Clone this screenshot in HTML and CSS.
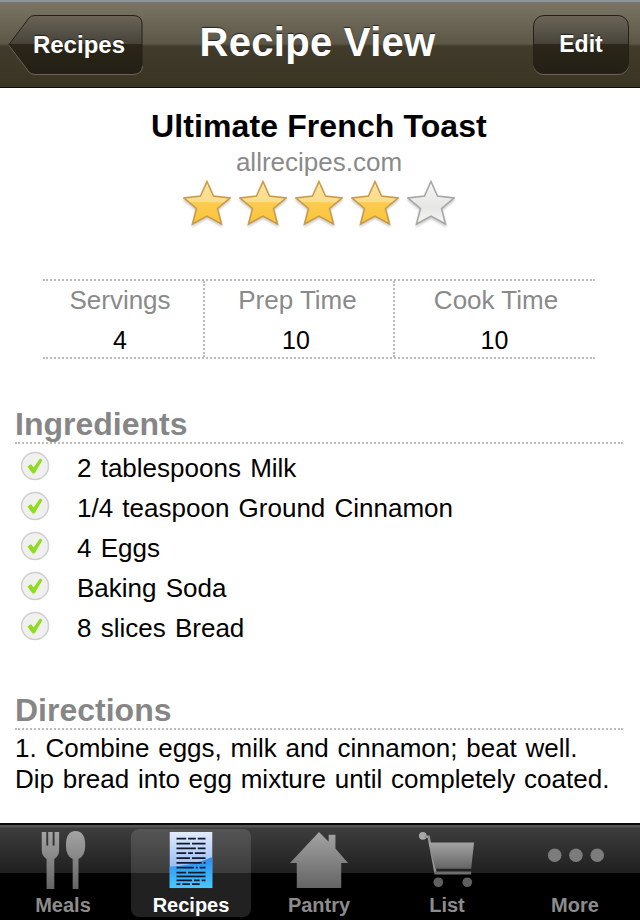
FILE: index.html
```html
<!DOCTYPE html>
<html lang="en">
<head>
    <meta charset="UTF-8">
    <meta name="viewport" content="width=device-width, initial-scale=1.0">
    <title>Recipe View</title>
    <link rel="stylesheet" href="styles.css">
</head>
<body>
    <svg class="defs" width="0" height="0">
        <defs>
            <linearGradient id="star-gold" x1="0" y1="0" x2="0" y2="1">
                <stop offset="0" stop-color="#fde3a0"/>
                <stop offset="0.47" stop-color="#fbdc8c"/>
                <stop offset="0.5" stop-color="#fccb4e"/>
                <stop offset="1" stop-color="#fbc53c"/>
            </linearGradient>
            <linearGradient id="star-grey" x1="0" y1="0" x2="0" y2="1">
                <stop offset="0" stop-color="#f6f6f4"/>
                <stop offset="0.6" stop-color="#e6e6e4"/>
                <stop offset="1" stop-color="#f6f6f4"/>
            </linearGradient>
            <linearGradient id="tab-grey" x1="0" y1="0" x2="0" y2="1">
                <stop offset="0" stop-color="#a4a4a4"/>
                <stop offset="1" stop-color="#646464"/>
            </linearGradient>
            <linearGradient id="doc-top" x1="0" y1="0" x2="0" y2="1">
                <stop offset="0" stop-color="#e2ebfc"/>
                <stop offset="0.6" stop-color="#9dbff4"/>
                <stop offset="1" stop-color="#6ea3ee"/>
            </linearGradient>
            <linearGradient id="doc-low" x1="0" y1="0" x2="0" y2="1">
                <stop offset="0" stop-color="#2a8cf0"/>
                <stop offset="1" stop-color="#45cbff"/>
            </linearGradient>
            <symbol id="star" viewBox="0 0 48 46">
                <path d="M24 1.500 L30.500 16 L47 18 L34.500 28.500 L38.500 44 L24 36 L9.500 44 L13.500 28.500 L1 18 L17.500 16 Z"/>
            </symbol>
            <symbol id="check" viewBox="0 0 30 30">
                <circle cx="15" cy="15" r="13.500" fill="#f0f0ee" stroke="#cfcfcd" stroke-width="1.500"/>
                <path d="M7.500 15.500 L11 13 L13.500 16.500 L20 7.500 L22.500 9 L14.500 22.500 L12.500 22.500 Z" fill="#8fdc1e"/>
            </symbol>
        </defs>
    </svg>

    <div class="page">
        <div class="navbar">
            <div class="nav-row">
                <div class="back-btn">
                    <svg class="back-shape" width="135" height="60" viewBox="0 0 135 60">
                        <defs>
                            <linearGradient id="back-fill" x1="0" y1="0" x2="0" y2="1">
                                <stop offset="0" stop-color="#6a6557"/>
                                <stop offset="0.49" stop-color="#48433a"/>
                                <stop offset="0.5" stop-color="#2b2619"/>
                                <stop offset="1" stop-color="#241f14"/>
                            </linearGradient>
                        </defs>
                        <path d="M1 29.500 L21 3 Q23 .5 27 .5 L125 .5 Q134 .5 134 9 L134 50 Q134 58.500 125 58.500 L27 58.500 Q23 58.500 21 56 Z" fill="url(#back-fill)" stroke="#25211a"/>
                        <path d="M1 30.500 L21 57 Q23 59.500 27 59.500 L125 59.500 Q134 59.500 134.500 51" fill="none" stroke="#7d7869" stroke-opacity="0.7"/>
                    </svg>
                    <span class="btn-label">Recipes</span>
                </div>
                <div class="nav-title">Recipe View</div>
                <div class="edit-btn"><span class="btn-label edit-label">Edit</span></div>
            </div>
        </div>

        <div class="content">
            <h1 class="title">Ultimate French Toast</h1>
            <div class="source">allrecipes.com</div>
            <div class="stars">
                <svg class="star gold"><use href="#star"/></svg>
                <svg class="star gold"><use href="#star"/></svg>
                <svg class="star gold"><use href="#star"/></svg>
                <svg class="star gold"><use href="#star"/></svg>
                <svg class="star empty"><use href="#star"/></svg>
            </div>

            <div class="times">
                <div class="time-col servings">
                    <div class="time-label">Servings</div>
                    <div class="time-value">4</div>
                </div>
                <div class="time-col prep">
                    <div class="time-label">Prep Time</div>
                    <div class="time-value">10</div>
                </div>
                <div class="time-col cook">
                    <div class="time-label">Cook Time</div>
                    <div class="time-value">10</div>
                </div>
            </div>

            <h2 class="section ingredients-head">Ingredients</h2>
            <ul class="ingredients">
                <li><svg class="check"><use href="#check"/></svg><span class="item-text">2 tablespoons Milk</span></li>
                <li><svg class="check"><use href="#check"/></svg><span class="item-text">1/4 teaspoon Ground Cinnamon</span></li>
                <li><svg class="check"><use href="#check"/></svg><span class="item-text">4 Eggs</span></li>
                <li><svg class="check"><use href="#check"/></svg><span class="item-text">Baking Soda</span></li>
                <li><svg class="check"><use href="#check"/></svg><span class="item-text">8 slices Bread</span></li>
            </ul>

            <h2 class="section directions-head">Directions</h2>
            <p class="directions">1. Combine eggs, milk and cinnamon; beat well.<br>Dip bread into egg mixture until completely coated.</p>
        </div>

        <div class="tabbar">
            <div class="tab">
                <svg class="tab-icon" width="64" height="60" viewBox="0 0 64 60">
                    <path d="M10 1 H14.700 V15 H16.700 V1 H21.300 V15 H23.300 V1 H28 V20 Q28 26 23 29 V60 H15 V29 Q10 26 10 20 Z" fill="url(#tab-grey)"/>
                    <path d="M45 0 Q55 0 55 15 Q55 26 48 29 V60 H42 V29 Q35 26 35 15 Q35 0 45 0 Z" fill="url(#tab-grey)"/>
                </svg>
                <span class="tab-label">Meals</span>
            </div>
            <div class="tab selected">
                <svg class="tab-icon" width="64" height="60" viewBox="0 0 64 60">
                    <rect x="10" y="1" width="44" height="58" fill="url(#doc-top)"/>
                    <path d="M10 37 Q34 36 54 27 V59 H10 Z" fill="url(#doc-low)"/>
                    <g stroke="#101a2c" stroke-width="1.800" fill="none">
                        <path d="M17 8 H27 M29 8 H37 M39 8 H47"/>
                        <path d="M17 13 H31 M33 13 H47"/>
                        <path d="M17 18 H37 M39 18 H47"/>
                        <path d="M17 23 H27 M29 23 H34 M36 23 H47"/>
                        <path d="M17 28 H31 M33 28 H47"/>
                        <path d="M17 33 H43 M45 33 H47"/>
                        <path d="M17 38 H35 M37 38 H39 M41 38 H47"/>
                        <path d="M17 43 H27 M29 43 H47"/>
                        <path d="M17 47 H47"/>
                        <path d="M17 51 H33 M35 51 H41 M43 51 H47"/>
                        <path d="M17 55 H21 M23 55 H31 M33 55 H41"/>
                    </g>
                </svg>
                <span class="tab-label">Recipes</span>
            </div>
            <div class="tab">
                <svg class="tab-icon" width="64" height="60" viewBox="0 0 64 60">
                    <path d="M32 1 L42 11 V4 H49 V18 L62 33 H55 V59 H9 V33 H2 Z" fill="url(#tab-grey)"/>
                </svg>
                <span class="tab-label">Pantry</span>
            </div>
            <div class="tab">
                <svg class="tab-icon" width="64" height="60" viewBox="0 0 64 60">
                    <circle cx="7" cy="5" r="4" fill="#a8a8a8"/>
                    <path d="M9 6 H13 L20 43" fill="none" stroke="#959595" stroke-width="2.500"/>
                    <path d="M13 12 H60 L57 39 H20 Z" fill="url(#tab-grey)"/>
                    <path d="M19 42 H57 V45 H19 Z" fill="#6e6e6e"/>
                    <circle cx="23" cy="53" r="5" fill="#606060"/>
                    <circle cx="53" cy="53" r="5" fill="#606060"/>
                </svg>
                <span class="tab-label">List</span>
            </div>
            <div class="tab">
                <svg class="tab-icon" width="64" height="60" viewBox="0 0 64 60">
                    <circle cx="11" cy="25" r="7" fill="#7c7c7c"/>
                    <circle cx="33" cy="25" r="7" fill="#7c7c7c"/>
                    <circle cx="55" cy="25" r="7" fill="#7c7c7c"/>
                </svg>
                <span class="tab-label">More</span>
            </div>
        </div>
    </div>
</body>
</html>
```

FILE: styles.css
```css
body {
    margin: 0;
    padding: 0;
    background: #fff;
    font-family: "Liberation Sans", Arial, sans-serif;
    color: #000;
}
.defs {
    position: absolute;
}
.page {
    width: 640px;
    height: 920px;
    display: flex;
    flex-direction: column;
    overflow: hidden;
}

/* top bar */
.navbar {
    height: 88px;
    flex: none;
    box-sizing: border-box;
    border-top: 2px solid #8f959c;
    border-bottom: 1px solid #0d0c08;
    background: linear-gradient(#7b7566 0, #5c5646 42px, #4d4737 43px, #413b2b 44px, #3a3423 100%);
}
.nav-row {
    display: grid;
    grid-template-columns: 1fr auto 1fr;
    align-items: center;
    height: 100%;
    padding: 0 11px 0 8px;
    box-sizing: border-box;
}
.back-btn {
    position: relative;
    width: 135px;
    height: 60px;
    display: flex;
    align-items: center;
    justify-content: flex-end;
    padding-right: 18px;
    box-sizing: border-box;
}
.back-shape {
    position: absolute;
    left: 0;
    top: 0;
}
.btn-label {
    position: relative;
    color: #fff;
    font-size: 24px;
    font-weight: bold;
    text-shadow: 0 -1px 1px #222;
}
.edit-label {
    font-size: 23px;
}
.nav-title {
    color: #fff;
    font-size: 40px;
    font-weight: bold;
    letter-spacing: 0.3px;
    text-shadow: 0 -1px 1px #222;
    position: relative;
    top: -2px;
    left: -1px;
}
.edit-btn {
    justify-self: end;
    width: 96px;
    height: 59px;
    box-sizing: border-box;
    display: flex;
    align-items: center;
    justify-content: center;
    border: 1px solid #25211a;
    border-radius: 11px;
    background: linear-gradient(#6a6557 0, #48433a 49%, #2b2619 50%, #241f14 100%);
    box-shadow: 0 1px 0 rgba(125, 120, 105, 0.7);
}

/* recipe body */
.content {
    flex: 1;
    padding: 0 17px 0 15px;
}
.title {
    margin: 20px 0 0;
    font-size: 32px;
    line-height: 37px;
    text-align: center;
    font-weight: bold;
    letter-spacing: 0.1px;
}
.source {
    font-size: 26px;
    line-height: 35px;
    text-align: center;
    color: #8a8a8a;
}
.stars {
    display: flex;
    justify-content: center;
    gap: 8px;
    height: 46px;
}
.star {
    width: 48px;
    height: 46px;
    filter: drop-shadow(0 2px 1px #ccc);
}
.star.gold {
    fill: url(#star-gold);
    stroke: #c99a45;
    stroke-width: 1.500;
}
.star.empty {
    fill: url(#star-grey);
    stroke: #a5a5a3;
    stroke-width: 1.500;
}

.times {
    display: flex;
    margin: 53px 0 0 28px;
    width: 552px;
    height: 80px;
    box-sizing: border-box;
    border-top: 2px dotted #bbb;
    border-bottom: 2px dotted #bbb;
    text-align: center;
}
.time-col {
    box-sizing: border-box;
    border-left: 2px dotted #bbb;
}
.time-col.servings {
    width: 160px;
    border-left: none;
    padding-right: 6px;
}
.time-col.prep {
    width: 190px;
    padding-right: 3px;
}
.time-col.cook {
    width: 202px;
    padding-left: 2px;
}
.time-label {
    margin-top: 2px;
    font-size: 26px;
    line-height: 34px;
    color: #8a8a8a;
}
.time-value {
    font-size: 25px;
    line-height: 34px;
    margin-top: 6px;
}
.prep .time-value,
.cook .time-value {
    padding-right: 3px;
}

.section {
    margin: 0;
    font-size: 32px;
    line-height: 36px;
    font-weight: bold;
    color: #868686;
    border-bottom: 2px dotted #bbb;
}
.ingredients-head {
    margin-top: 47px;
}
.ingredients {
    list-style: none;
    margin: 3px 0 0;
    padding: 0;
}
.ingredients li {
    display: flex;
    align-items: center;
    height: 40px;
    font-size: 26px;
    word-spacing: 2px;
}
.item-text {
    position: relative;
    top: 1px;
}
.check {
    width: 30px;
    height: 30px;
    margin: 0 27px 0 5px;
    flex: none;
    position: relative;
    top: -1px;
}
.directions-head {
    margin-top: 45px;
}
.directions {
    margin: 3px 0 0;
    font-size: 26px;
    line-height: 31px;
    word-spacing: 1.500px;
    white-space: nowrap;
}

/* bottom tabs */
.tabbar {
    height: 97px;
    flex: none;
    box-sizing: border-box;
    display: flex;
    border-top: 2px solid #0a0a0a;
    background: linear-gradient(#555 0, #555 2px, #3d3d3d 3px, #1f1f1f 48px, #000 48px);
    padding: 4px 0 3px;
}
.tab {
    width: 128px;
    flex: none;
    display: flex;
    flex-direction: column;
    align-items: center;
    box-sizing: border-box;
}
.tab:first-child {
    margin-left: -1px;
}
.tab.selected {
    width: 120px;
    margin: 0 4px;
    background: rgba(255, 255, 255, 0.13);
    border-radius: 8px;
}
.tab-icon {
    display: block;
    margin-top: 2px;
}
.tab-label {
    margin-top: 4px;
    font-size: 20px;
    line-height: 24px;
    font-weight: bold;
    color: #8c8c8c;
}
.tab.selected .tab-label {
    color: #fff;
}
```
